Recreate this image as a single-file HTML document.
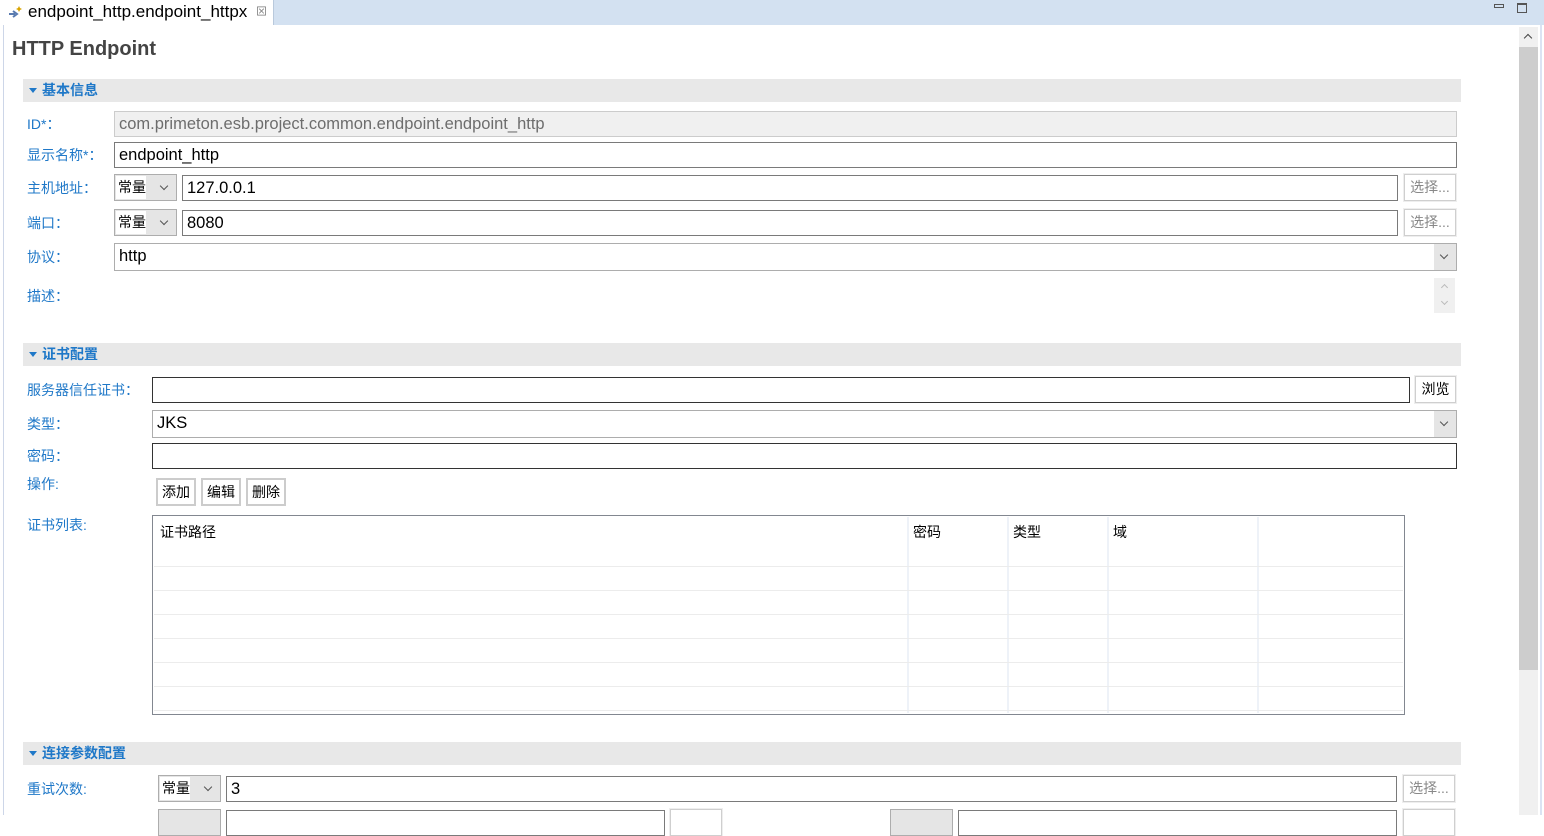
<!DOCTYPE html>
<html><head><meta charset="utf-8"><style>
*{box-sizing:border-box;margin:0;padding:0}
body{width:1544px;height:815px;overflow:hidden;background:#fff;font-family:"Liberation Sans","Noto Sans CJK SC",sans-serif;font-size:14px;color:#000;position:relative}
.a{position:absolute}
.lbl{position:absolute;color:#1f78c8;font-size:14px;line-height:16px}
.sec{position:absolute;left:23px;width:1438px;height:23px;background:#e8e8e8;color:#1f78c8;font-weight:bold;font-size:14px;line-height:23px;padding-left:19px}
.sec:before{content:"";position:absolute;left:6px;top:9px;border-left:4px solid transparent;border-right:4px solid transparent;border-top:5px solid #1f78c8}
.in{position:absolute;border:1px solid #7a7a7a;background:#fff;padding-left:4px;font-size:16.5px;line-height:24px;white-space:nowrap;overflow:hidden}
.cb{position:absolute;border:1px solid #adadad;background:#e5e5e5;font-size:14px;line-height:24px}
.cb span{position:absolute;left:1px;top:1px;bottom:1px;background:#fff;padding-left:2px;line-height:23px}
.cb i{position:absolute;right:0;top:0;width:22px;height:100%}
.cb i:after,.dd:after{content:"";position:absolute;left:7px;top:8px;width:5px;height:5px;border-right:1px solid #555;border-bottom:1px solid #555;transform:rotate(45deg)}
.bt{position:absolute;border:1px solid #cfcfcf;background:#fff;font-size:14px;line-height:24px;text-align:center;color:#888;outline:1px solid #eee}
.bk{color:#000}
.sel{position:absolute;border:1px solid #adadad;background:#fff;padding-left:4px;font-size:16.5px;line-height:25px}
.dd{position:absolute;right:0;top:0;width:22px;height:100%;background:#e5e5e5}
.hl{position:absolute;left:1px;right:1px;height:1px;background:#ececec}
.vl{position:absolute;top:1px;bottom:1px;width:2px;background:#eef2f8}
</style></head><body>
<div class="a" style="left:0;top:0;width:1544px;height:25px;background:#d3e1f1"></div>
<div class="a" style="left:0;top:0;width:274px;height:25px;background:#fff;border-right:1px solid #b9c9dc"></div>
<svg class="a" style="left:7px;top:4px" width="18" height="16" viewBox="0 0 18 16"><path d="M2 10h6M6 7l4 3-4 3" stroke="#5a7bb0" stroke-width="2" fill="none"/><path d="M12 2l1 2 2 1-2 1-1 2-1-2-2-1 2-1z" fill="#d9a400"/></svg>
<div class="a" style="left:28px;top:2px;font-size:17px;line-height:20px">endpoint_http.endpoint_httpx</div>
<div class="a" style="left:256px;top:3px;font-size:11px;color:#777">⊠</div>
<div class="a" style="left:1494px;top:4px;width:10px;height:4px;border:1px solid #555"></div>
<div class="a" style="left:1517px;top:3px;width:10px;height:10px;border:1px solid #555;border-top-width:2px"></div>
<div class="a" style="left:3px;top:25px;width:1px;height:790px;background:#cdd6e8"></div>
<div class="a" style="left:1540px;top:25px;width:2px;height:790px;background:#dbe3f3"></div>
<div class="a" style="left:1519px;top:27px;width:19px;height:788px;background:#f0f0f0"></div>
<div class="a" style="left:1519px;top:47px;width:19px;height:623px;background:#cdcdcd"></div>
<div class="a" style="left:1525px;top:35px;width:6px;height:6px;border-left:1.5px solid #444;border-top:1.5px solid #444;transform:rotate(45deg)"></div>

<div class="a" style="left:12px;top:37px;font-size:20px;font-weight:bold;color:#444;line-height:24px">HTTP Endpoint</div>

<div class="sec" style="top:79px">基本信息</div>
<div class="lbl" style="left:27px;top:116px">ID*：</div>
<div class="in" style="left:114px;top:111px;width:1343px;height:26px;background:#f0f0f0;border-color:#ccc;color:#6d6d6d">com.primeton.esb.project.common.endpoint.endpoint_http</div>
<div class="lbl" style="left:27px;top:147px">显示名称*：</div>
<div class="in" style="left:114px;top:142px;width:1343px;height:26px">endpoint_http</div>
<div class="lbl" style="left:27px;top:180px">主机地址：</div>
<div class="cb" style="left:114px;top:174px;width:63px;height:27px"><span>常量</span><i></i></div>
<div class="in" style="left:182px;top:175px;width:1216px;height:26px">127.0.0.1</div>
<div class="bt" style="left:1404px;top:174px;width:52px;height:27px">选择...</div>
<div class="lbl" style="left:27px;top:215px">端口：</div>
<div class="cb" style="left:114px;top:209px;width:63px;height:27px"><span>常量</span><i></i></div>
<div class="in" style="left:182px;top:210px;width:1216px;height:26px">8080</div>
<div class="bt" style="left:1404px;top:209px;width:52px;height:27px">选择...</div>
<div class="lbl" style="left:27px;top:249px">协议：</div>
<div class="sel" style="left:114px;top:243px;width:1343px;height:28px">http<div class="dd"></div></div>
<div class="lbl" style="left:27px;top:288px">描述：</div>
<div class="a" style="left:1434px;top:278px;width:21px;height:35px;background:#f0f0f0"></div>
<div class="a" style="left:1442px;top:285px;width:5px;height:5px;border-left:1px solid #bbb;border-top:1px solid #bbb;transform:rotate(45deg)"></div>
<div class="a" style="left:1442px;top:299px;width:5px;height:5px;border-right:1px solid #bbb;border-bottom:1px solid #bbb;transform:rotate(45deg)"></div>

<div class="sec" style="top:343px">证书配置</div>
<div class="lbl" style="left:27px;top:382px">服务器信任证书：</div>
<div class="in" style="left:152px;top:377px;width:1258px;height:26px;border-color:#333"></div>
<div class="bt bk" style="left:1415px;top:376px;width:41px;height:27px">浏览</div>
<div class="lbl" style="left:27px;top:416px">类型：</div>
<div class="sel" style="left:152px;top:410px;width:1305px;height:28px">JKS<div class="dd"></div></div>
<div class="lbl" style="left:27px;top:448px">密码：</div>
<div class="in" style="left:152px;top:443px;width:1305px;height:26px;border-color:#333"></div>
<div class="lbl" style="left:27px;top:476px">操作:</div>
<div class="bt bk" style="left:156px;top:478px;width:40px;height:28px;border:2px solid #ccc;outline:none">添加</div>
<div class="bt bk" style="left:201px;top:478px;width:40px;height:28px;border:2px solid #ccc;outline:none">编辑</div>
<div class="bt bk" style="left:246px;top:478px;width:40px;height:28px;border:2px solid #ccc;outline:none">删除</div>
<div class="lbl" style="left:27px;top:517px">证书列表:</div>
<div class="a" style="left:152px;top:515px;width:1253px;height:200px;border:1px solid #828790">
  <div class="a" style="left:7px;top:6px;font-size:14px">证书路径</div>
  <div class="a" style="left:760px;top:6px;font-size:14px">密码</div>
  <div class="a" style="left:860px;top:6px;font-size:14px">类型</div>
  <div class="a" style="left:960px;top:6px;font-size:14px">域</div>
  <div class="vl" style="left:754px"></div><div class="vl" style="left:854px"></div><div class="vl" style="left:954px"></div><div class="vl" style="left:1104px"></div>
  <div class="hl" style="top:50px"></div><div class="hl" style="top:74px"></div><div class="hl" style="top:98px"></div><div class="hl" style="top:122px"></div><div class="hl" style="top:146px"></div><div class="hl" style="top:170px"></div><div class="hl" style="top:194px"></div>
</div>

<div class="sec" style="top:742px">连接参数配置</div>
<div class="lbl" style="left:27px;top:781px">重试次数:</div>
<div class="cb" style="left:158px;top:775px;width:63px;height:27px"><span>常量</span><i></i></div>
<div class="in" style="left:226px;top:776px;width:1171px;height:26px">3</div>
<div class="bt" style="left:1403px;top:775px;width:52px;height:27px">选择...</div>
<div class="cb" style="left:158px;top:809px;width:63px;height:27px"></div>
<div class="in" style="left:226px;top:810px;width:439px;height:26px"></div>
<div class="bt" style="left:670px;top:809px;width:52px;height:27px"></div>
<div class="cb" style="left:890px;top:809px;width:63px;height:27px"></div>
<div class="in" style="left:958px;top:810px;width:439px;height:26px"></div>
<div class="bt" style="left:1403px;top:809px;width:52px;height:27px"></div>
</body></html>
